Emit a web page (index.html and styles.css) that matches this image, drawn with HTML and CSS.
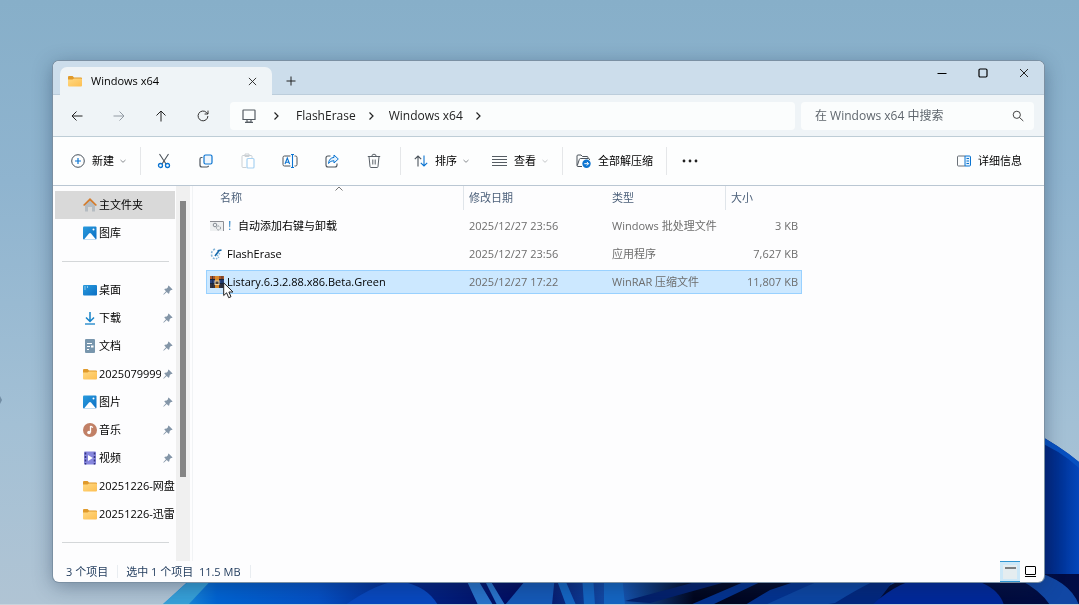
FILE: index.html
```html
<!DOCTYPE html>
<html lang="zh-CN">
<head>
<meta charset="utf-8">
<meta name="viewport" content="width=device-width, initial-scale=1">
<title>Windows x64</title>
<link rel="stylesheet" href="styles.css">
</head>
<body>
<svg class="defs" width="0" height="0" aria-hidden="true">
  <defs>
    <linearGradient id="gFolder" x1="0" y1="0" x2="1" y2="1"><stop offset="0" stop-color="#ffd983"/><stop offset="1" stop-color="#fdbf52"/></linearGradient>
    <linearGradient id="gBlue" x1="0" y1="0" x2="1" y2="1"><stop offset="0" stop-color="#2a9bdd"/><stop offset="1" stop-color="#0b6fc4"/></linearGradient>
    <symbol id="folder" viewBox="0 0 14 12"><path d="M0 2Q0 1 1 1H4.600L6 2.500H13Q14 2.500 14 3.500V5H0Z" fill="#e09a2b"/><path d="M0 5V10.500Q0 11.500 1 11.500H13Q14 11.500 14 10.500V4.200Q14 3.500 13 3.500H6L4.500 4.500H0Z" fill="url(#gFolder)"/></symbol>
    <symbol id="pin" viewBox="0 0 10 10"><path d="M5.600.4 9.600 4.400 8.700 5 7.900 4.900 6.600 6.400 6.300 8.300 5.500 8.800 3.700 7 .7 9.700.3 9.300 3 6.300 1.300 4.600 1.900 3.800 3.800 3.500 5.100 2.100 5 1.200Z" fill="#8496a8"/></symbol>
    <symbol id="chevron-right" viewBox="0 0 8 10"><path d="M2.500 1.500 6 5 2.500 8.500" fill="none" stroke="#222" stroke-width="1.200"/></symbol>
    <symbol id="chevron-down" viewBox="0 0 8 8"><path d="M1.500 3 4 5.300 6.500 3" fill="none" stroke="#8b8f93"/></symbol>
    <symbol id="picture" viewBox="0 0 14 14"><rect y=".5" width="13.500" height="13" rx="1" fill="url(#gBlue)"/><path d="M1 13.500 6 7.500Q7 6.500 8 7.500L13 13.500Z" fill="#fff"/><circle cx="10.500" cy="3.500" r="1" fill="#fff"/></symbol>
    <symbol id="close" viewBox="0 0 10 10"><path d="M1 1 9 9M9 1 1 9" stroke="#222" fill="none"/></symbol>
  </defs>
</svg>

<svg class="wallpaper" viewBox="0 0 1079 605" preserveAspectRatio="none" aria-hidden="true">
  <defs>
    <linearGradient id="sky" x1="0" y1="0" x2="0" y2="1"><stop offset="0" stop-color="#87afc9"/><stop offset=".3" stop-color="#8fb4cf"/><stop offset=".7" stop-color="#a3c0d5"/><stop offset="1" stop-color="#b0c4d4"/></linearGradient>
    <linearGradient id="petalRight" x1="0" y1="0" x2="1" y2="0"><stop offset="0" stop-color="#011667"/><stop offset=".6" stop-color="#003295"/><stop offset="1" stop-color="#0346bb"/></linearGradient>
    <linearGradient id="floor" x1="0" y1="0" x2="1" y2="0"><stop offset="0" stop-color="#2ba0dc"/><stop offset=".06" stop-color="#0063d2"/><stop offset=".17" stop-color="#0550c4"/><stop offset=".26" stop-color="#02268a"/><stop offset=".4" stop-color="#020a5c"/><stop offset=".5" stop-color="#1556b4"/><stop offset=".58" stop-color="#01051d"/><stop offset="1" stop-color="#010c45"/></linearGradient>
  </defs>
  <rect width="1079" height="605" fill="url(#sky)"/>
  <path d="M1030 430Q1060 446 1079 462V605H1030Z" fill="url(#petalRight)"/>
  <path d="M1030 430Q1060 446 1079 462V468Q1060 450 1030 438Z" fill="#0750c0"/>
  <path d="M162 605 196 574H1079V605Z" fill="url(#floor)"/>
  <path d="M162 605 196 575H216L188 605Z" fill="#36a0d8"/>
  <path d="M345 605Q380 581 400 581Q427 586 438 605Z" fill="#0848bf"/>
  <path d="M464 575 478 605H493L475 575ZM482 575 497 605H505L487 575Z" fill="#2873ca"/>
  <path d="M505 605 530 575H555L552 605Z" fill="#1559b7"/>
  <path d="M555 575 566 605H576L563 575ZM582 575H593L595 605H584ZM604 575H622L625 605H604Z" fill="#1465c2"/>
  <path d="M625 601 710 578H740L650 603Z" fill="#03206c"/>
  <path d="M690 605 760 575H775L712 605ZM745 605 770 590 815 575H830L772 605Z" fill="#03328f"/>
  <path d="M765 605 825 578H905L850 605Z" fill="#0c45a2"/>
  <path d="M822 605 835 603Q880 575 900 572L875 605Z" fill="#02277e"/>
  <path d="M872 605Q900 579 935 575Q995 576 1004 605Z" fill="#002899"/>
  <path d="M1030 570Q1070 580 1079 605H1050Q1040 590 1020 580Z" fill="#1147a4"/>
  <rect y="604" width="1079" height="1" fill="#c9d3dc"/>
  <path d="M0 396 2 400 0 404Z" fill="#728da4"/>
</svg>

<main class="desktop">
<section class="window" aria-label="Windows x64">
  <header class="titlebar">
    <div class="tab">
      <svg width="14" height="12"><use href="#folder"/></svg>
      <span class="tab-name">Windows x64</span>
      <button class="tab-close" aria-label="关闭标签页"><svg width="9" height="9"><use href="#close"/></svg></button>
    </div>
    <button class="tab-add" aria-label="新建标签页"><svg width="10" height="10" viewBox="0 0 10 10"><path d="M5 .5V9.500M.5 5H9.500" stroke="#222"/></svg></button>
    <div class="controls">
      <button aria-label="最小化"><svg width="10" height="10" viewBox="0 0 10 10"><path d="M.5 5.500H9.500" stroke="#000"/></svg></button>
      <button aria-label="最大化"><svg width="10" height="10" viewBox="0 0 10 10"><rect x="1" y="1" width="8" height="8" rx="1.200" fill="none" stroke="#000" stroke-width="1.200"/></svg></button>
      <button aria-label="关闭"><svg width="10" height="10"><use href="#close"/></svg></button>
    </div>
  </header>

  <div class="navbar">
    <div class="nav-buttons">
      <button aria-label="后退"><svg width="12" height="12" viewBox="0 0 12 12"><path d="M11.500 6H1M5.500 1.500 1 6 5.500 10.500" fill="none" stroke="#222"/></svg></button>
      <button aria-label="前进" disabled><svg width="12" height="12" viewBox="0 0 12 12"><path d="M.5 6H11M6.500 1.500 11 6 6.500 10.500" fill="none" stroke="#929aa3"/></svg></button>
      <button aria-label="向上"><svg width="12" height="12" viewBox="0 0 12 12"><path d="M6 11.500V1M1.500 5.500 6 1 10.500 5.500" fill="none" stroke="#222"/></svg></button>
      <button aria-label="刷新"><svg width="12" height="12" viewBox="0 0 12 12"><path d="M10.900 6A4.900 4.900 0 1 1 9.600 2.600L11 4M11 .6V4H7.600" fill="none" stroke="#333"/></svg></button>
    </div>
    <nav class="address" aria-label="地址">
      <svg width="14" height="14" viewBox="0 0 14 14"><path d="M1.500 1H12.500Q13 1 13 1.500V10.500H1V1.500Q1 1 1.500 1Z" fill="none" stroke="#555c63" stroke-width="1.200"/><path d="M5 11V13H9V11M3 13.300H11" fill="none" stroke="#555c63" stroke-width="1.200"/></svg>
      <svg class="crumb-sep" width="8" height="10"><use href="#chevron-right"/></svg>
      <a href="#flasherase">FlashErase</a>
      <svg class="crumb-sep" width="8" height="10"><use href="#chevron-right"/></svg>
      <a href="#windows">Windows x64</a>
      <svg class="crumb-sep" width="8" height="10"><use href="#chevron-right"/></svg>
    </nav>
    <label class="search">
      <input type="text" placeholder="在 Windows x64 中搜索" aria-label="搜索">
      <svg width="12" height="12" viewBox="0 0 12 12"><circle cx="4.800" cy="4.800" r="3.600" fill="none" stroke="#444"/><path d="M7.500 7.500 11.300 11" stroke="#444"/></svg>
    </label>
  </div>

  <div class="toolbar">
    <button class="tool"><svg width="14" height="14" viewBox="0 0 14 14"><circle cx="7" cy="7" r="6.300" fill="none" stroke="#46505a"/><path d="M7 4V10M4 7H10" stroke="#0b74d1" stroke-width="1.200"/></svg><span>新建</span><svg width="8" height="8"><use href="#chevron-down"/></svg></button>
    <span class="divider"></span>
    <div class="tool-icons">
      <button aria-label="剪切"><svg width="14" height="16" viewBox="0 0 14 16"><path d="M2.500 1 9 11M11.500 1 5 11" fill="none" stroke="#4b535b" stroke-width="1.100"/><circle cx="3.500" cy="12.500" r="2" fill="none" stroke="#0b74d1" stroke-width="1.300"/><circle cx="10.500" cy="12.500" r="2" fill="none" stroke="#0b74d1" stroke-width="1.300"/></svg></button>
      <button aria-label="复制"><svg width="14" height="14" viewBox="0 0 14 14"><rect x="5" y="1" width="8" height="9" rx="1.500" fill="#eef6fd" stroke="#0b74d1" stroke-width="1.200"/><path d="M3.500 3.500H2.500Q1 3.500 1 5V11Q1 13 3 13H8Q9.500 13 9.500 11.800" fill="none" stroke="#4b535b" stroke-width="1.200"/></svg></button>
      <button aria-label="粘贴" disabled><svg width="14" height="16" viewBox="0 0 14 16"><path d="M5.500 14.500H2Q1 14.500 1 13.500V3.500Q1 2.500 2 2.500H10Q11 2.500 11 3.500V5M4 3.500V1H8V3.500Z" fill="none" stroke="#cbd0d4"/><rect x="6" y="5.500" width="7" height="9.500" rx="1" fill="#fff" stroke="#a8d2f2" stroke-width="1.200"/></svg></button>
      <button aria-label="重命名"><svg width="16" height="16" viewBox="0 0 16 16"><path d="M8.500 3H2.500Q1 3 1 4.500V11.500Q1 13 2.500 13H8.500M12.500 3H13.500Q15 3 15 4.500V11.500Q15 13 13.500 13H12.500" fill="none" stroke="#4b535b"/><path d="M10.500 1.500V14.500M9 1.500H12M9 14.500H12M3 11 5.300 5 7.600 11M3.800 9.200H6.800" fill="none" stroke="#0b74d1" stroke-width="1.100"/></svg></button>
      <button aria-label="共享"><svg width="14" height="14" viewBox="0 0 14 14"><path d="M5.500 2H3Q1 2 1 4V11Q1 13 3 13H10Q12 13 12 11V9.500" fill="none" stroke="#4b535b" stroke-width="1.100"/><path d="M9 1 13.300 5 9 9V6.700Q5.500 6.500 3.500 9.500Q4 3.800 9 3.400Z" fill="#e6f3fd" stroke="#0b74d1" stroke-linejoin="round"/></svg></button>
      <button aria-label="删除"><svg width="14" height="16" viewBox="0 0 14 16"><path d="M.8 3.500H13.200M4.800 3.500Q4.800 1.200 7 1.200T9.200 3.500M2 3.500 3 13.500Q3.100 14.500 4 14.500H10Q10.900 14.500 11 13.500L12 3.500M5.800 6.500V11.500M8.200 6.500V11.500" fill="none" stroke="#5b6269"/></svg></button>
    </div>
    <span class="divider"></span>
    <button class="tool sort"><svg width="14" height="12" viewBox="0 0 14 12"><path d="M4 11.500V1M.8 4.200 4 1 7.200 4.200" fill="none" stroke="#4b535b" stroke-width="1.100"/><path d="M10 .5V11M6.800 7.800 10 11 13.200 7.800" fill="none" stroke="#0b74d1" stroke-width="1.100"/></svg><span>排序</span><svg width="8" height="8"><use href="#chevron-down"/></svg></button>
    <button class="tool"><svg width="15" height="12" viewBox="0 0 15 12"><path d="M0 1.500H15M0 4.500H15M0 7.500H15M0 10.500H15" stroke="#555c63"/></svg><span>查看</span><svg class="faint" width="8" height="8"><use href="#chevron-down"/></svg></button>
    <span class="divider"></span>
    <button class="tool"><svg width="15" height="14" viewBox="0 0 15 14"><path d="M6 12.500H2Q1 12.500 1 11.500V2Q1 1 2 1H5L6.500 2.500H11Q12 2.500 12 3.500V4.500M1.300 11.500 3.300 5.500Q3.600 4.500 4.500 4.500H12.500Q13.800 4.500 13.500 6" fill="none" stroke="#4b535b"/><circle cx="10.500" cy="9.700" r="4.200" fill="#0b74d1"/><path d="M8.300 9.700H12.500M10.800 7.900 12.600 9.700 10.800 11.500" fill="none" stroke="#fff"/></svg><span>全部解压缩</span></button>
    <span class="divider"></span>
    <button class="more" aria-label="更多"><svg width="16" height="4" viewBox="0 0 16 4"><g fill="#222"><circle cx="2" cy="2" r="1.400"/><circle cx="8" cy="2" r="1.400"/><circle cx="14" cy="2" r="1.400"/></g></svg></button>
    <button class="tool details"><svg width="14" height="12" viewBox="0 0 14 12"><path d="M8 1H1.500Q.5 1 .5 2V10Q.5 11 1.500 11H8" fill="none" stroke="#6a7178"/><path d="M8 1H12.500Q13.500 1 13.500 2V10Q13.500 11 12.500 11H8Z" fill="#e4f2fd" stroke="#0b74d1"/><path d="M9.500 3.500H12M9.500 6H12M9.500 8.500H12" stroke="#0b74d1"/></svg><span>详细信息</span></button>
  </div>

  <div class="body">
    <nav class="sidebar" aria-label="导航窗格">
      <a class="place current" href="#home"><svg width="14" height="14" viewBox="0 0 14 14"><path d="M2 6 7 1.500 12 6V13Q12 13.500 11.500 13.500H9V9H5V13.500H2.500Q2 13.500 2 13Z" fill="#b5bcc2"/><path d="M.6 7.500 7 1.300 13.400 7.500" fill="none" stroke="#d57b2a" stroke-width="1.700"/></svg><span>主文件夹</span></a>
      <a class="place" href="#gallery"><svg width="14" height="14"><use href="#picture"/></svg><span>图库</span></a>
      <hr>
      <a class="place" href="#desktop"><svg width="14" height="14" viewBox="0 0 14 14"><rect y="2" width="14" height="10.500" rx="1" fill="url(#gBlue)"/><path d="M1.500 4H2.500M1.500 6H2.500M4 4H5" stroke="#fff"/></svg><span>桌面</span><svg width="10" height="10"><use href="#pin"/></svg></a>
      <a class="place" href="#downloads"><svg width="14" height="14" viewBox="0 0 14 14"><path d="M7 1V10M3 6.500 7 10.500 11 6.500" fill="none" stroke="#1683c8" stroke-width="1.500"/><path d="M2 13H12" stroke="#1683c8" stroke-width="1.300"/></svg><span>下载</span><svg width="10" height="10"><use href="#pin"/></svg></a>
      <a class="place" href="#documents"><svg width="14" height="14" viewBox="0 0 14 14"><rect x="2" width="10" height="14" rx="1" fill="#7896ad"/><path d="M4 4.500H9M4 7.500H7M4 10.500H6" stroke="#fff"/><path d="M8 7.500H10.500" stroke="#fff" stroke-width="2"/></svg><span>文档</span><svg width="10" height="10"><use href="#pin"/></svg></a>
      <a class="place" href="#f2025"><svg width="14" height="12"><use href="#folder"/></svg><span>2025079999</span><svg width="10" height="10"><use href="#pin"/></svg></a>
      <a class="place" href="#pictures"><svg width="14" height="14"><use href="#picture"/></svg><span>图片</span><svg width="10" height="10"><use href="#pin"/></svg></a>
      <a class="place" href="#music"><svg width="14" height="14" viewBox="0 0 14 14"><circle cx="7" cy="7" r="7" fill="#c18066"/><path d="M7.500 3V9.300M7.500 3.200 10 4.500" fill="none" stroke="#fff" stroke-width="1.300"/><circle cx="6" cy="9.500" r="1.800" fill="#fff"/></svg><span>音乐</span><svg width="10" height="10"><use href="#pin"/></svg></a>
      <a class="place" href="#videos"><svg width="14" height="14" viewBox="0 0 14 14"><rect x="1" y=".5" width="12" height="13" rx="1" fill="#8686dd"/><path d="M2.500 1.500V13.500M11.500 1.500V13.500" stroke="#34357d" stroke-width="1.500" stroke-dasharray="2 1.500"/><path d="M5 4 9.800 7 5 10Z" fill="#fff"/></svg><span>视频</span><svg width="10" height="10"><use href="#pin"/></svg></a>
      <a class="place" href="#f1226a"><svg width="14" height="12"><use href="#folder"/></svg><span>20251226-网盘</span></a>
      <a class="place" href="#f1226b"><svg width="14" height="12"><use href="#folder"/></svg><span>20251226-迅雷</span></a>
      <hr>
    </nav>
    <div class="scrollbar"><span class="thumb"></span></div>
    <div class="files">
      <table>
        <colgroup><col class="c-name"><col class="c-date"><col class="c-type"><col class="c-size"></colgroup>
        <thead>
          <tr><th class="sorted">名称<svg class="sort-mark" width="8" height="5" viewBox="0 0 8 5"><path d="M.5 4.500 4 1 7.500 4.500" fill="none" stroke="#777"/></svg></th><th>修改日期</th><th>类型</th><th>大小</th></tr>
        </thead>
        <tbody>
          <tr><td><div class="file"><svg width="14" height="14" viewBox="0 0 14 14"><path d="M0 2.500H13.500V12" fill="none" stroke="#8d8f95"/><rect y="3" width="13" height="9" fill="#eef0f1"/><circle cx="5" cy="6" r="1.800" fill="none" stroke="#858c94"/><circle cx="8.500" cy="9" r="2" fill="none" stroke="#858c94" stroke-dasharray="1.500 1"/></svg><span><span class="bang">！</span>自动添加右键与卸载</span></div></td><td>2025/12/27 23:56</td><td>Windows 批处理文件</td><td>3 KB</td></tr>
          <tr><td><div class="file"><svg width="14" height="14" viewBox="0 0 14 14"><path d="M5 2Q1 4 1.500 8Q2.500 12 6.500 12" fill="none" stroke="#83b4d8" stroke-width="1.500" stroke-dasharray="2 1.500"/><path d="M5 9 9.500 3M7.500 4 11.500 3" stroke="#1769aa" stroke-width="1.600"/><path d="M7 9 10 6M6 12 9 10" stroke="#86badd" stroke-width="1.500" stroke-dasharray="1.500 1"/></svg><span>FlashErase</span></div></td><td>2025/12/27 23:56</td><td>应用程序</td><td>7,627 KB</td></tr>
          <tr class="selected"><td><div class="file"><svg width="14" height="14" viewBox="0 0 14 14"><rect y="1" width="14" height="4" fill="#a8562a"/><rect y="5" width="14" height="4" fill="#29437f"/><rect y="9" width="14" height="4" fill="#35333e"/><path d="M0 4.500H14M0 8.500H14" stroke="#16243c"/><path d="M2.500 1V13M12 1V13" stroke="#16243c" stroke-opacity=".6"/><rect x="5" y="1" width="4" height="12" fill="#d98a2b"/><rect x="5" y="6" width="4" height="3.500" fill="#4a4038" stroke="#f1d5a3"/></svg><span>Listary.6.3.2.88.x86.Beta.Green</span><svg class="cursor" width="12" height="18" viewBox="0 0 12 18"><path d="M.7.8V13.500L3.600 10.800 5.700 15.700 8 14.700 5.900 10H10Z" fill="#fff" stroke="#222" stroke-linejoin="round"/></svg></div></td><td>2025/12/27 17:22</td><td>WinRAR 压缩文件</td><td>11,807 KB</td></tr>
        </tbody>
      </table>
    </div>
  </div>

  <footer class="status">
    <span class="status-part">3 个项目</span>
    <span class="status-part">选中 1 个项目&nbsp; 11.5 MB</span>
    <div class="views">
      <button class="on" aria-label="详细信息视图"><svg width="14" height="14" viewBox="0 0 14 14"><rect width="14" height="14" fill="#e5edf0"/><path d="M2 3H13" stroke="#111"/></svg></button>
      <button aria-label="大图标视图"><svg width="13" height="13" viewBox="0 0 13 13"><rect x="1.500" y="1.500" width="10" height="8" rx=".5" fill="none" stroke="#000"/><path d="M1 11.500H12" stroke="#000"/></svg></button>
    </div>
  </footer>
</section>
</main>
</body>
</html>
```
FILE: styles.css
```css
* { box-sizing: border-box; }

body {
  margin: 0;
  background: #8fb4cf;
  color: #000;
  font: 11px/16px "Open Sans", "Noto Sans CJK SC", sans-serif;
}

button, input { font: inherit; color: inherit; }
button { display: flex; align-items: center; justify-content: center; padding: 0; border: 0; background: none; }
a { color: inherit; text-decoration: none; }
svg { display: block; flex: none; }

.defs { position: absolute; }
.wallpaper { position: fixed; inset: 0; z-index: -1; width: 100%; height: 100%; }

.desktop { display: flex; min-height: 100vh; padding: 61px 35px 23px 53px; }

.window {
  display: flex;
  flex: 1;
  flex-direction: column;
  min-width: 0;
  overflow: hidden;
  border-radius: 6px;
  background: #fdfdfe;
  box-shadow: 0 0 0 1px #7b90a3, 0 4px 20px rgba(20, 40, 70, .4);
}

.titlebar { display: flex; height: 34px; padding-left: 7px; background: #ccddeb; box-shadow: inset 0 -1px #bccddb; }
.tab {
  position: relative;
  display: flex;
  align-items: center;
  width: 212px;
  margin-top: 6px;
  padding: 0 15px 0 8px;
  border-radius: 7px 7px 0 0;
  background: #eff4f7;
}
.tab-name { flex: 1; margin-left: 9px; font-weight: 500; }
.tab-close { width: 10px; height: 20px; }
.tab-add { width: 38px; margin-top: 6px; }
.controls { display: flex; height: 24px; margin-left: auto; }
.controls button { width: 41px; }

.navbar { display: flex; align-items: center; height: 42px; padding-right: 10px; border-bottom: 1px solid #becdd6; background: #eff4f7; font-size: 12px; }
.nav-buttons { display: flex; padding: 0 6px 0 3px; }
.nav-buttons button { width: 42px; height: 28px; }
.address { display: flex; flex: 1; align-items: center; height: 28px; padding-left: 12px; border-radius: 4px; background: #fbfdfd; color: #222; }
.crumb-sep { margin: 0 16px; }
.address a + .crumb-sep { margin: 0 14px 0 11px; }
.search { display: flex; align-items: center; width: 233px; height: 28px; margin-left: 6px; padding: 0 10px 0 14px; border-radius: 4px; background: #fbfdfd; }
.search input { flex: 1; min-width: 0; padding: 0; border: 0; outline: 0; background: none; }
.search input::placeholder { color: #5f666d; opacity: 1; }

.toolbar { display: flex; align-items: center; height: 49px; padding: 0 14px 0 10px; border-bottom: 1px solid #bac7d3; background: #fdfefe; }
.tool { height: 32px; padding: 0 8px; }
.tool span { margin: 0 5px 0 7px; }
.tool span:last-child { margin-right: 0; }
.sort { margin-right: 6px; }
.faint { opacity: .5; }
.divider { width: 1px; height: 28px; margin: 0 5px; background: #e5e7e9; }
.tool-icons { display: flex; margin-left: -3px; }
.tool-icons button { width: 42px; height: 32px; }
.more { width: 36px; height: 32px; }
.details { margin-left: auto; }

.body { display: flex; flex: 1; min-height: 0; }
.sidebar { width: 123px; padding: 5px 1px 0 2px; overflow: hidden; }
.place { display: flex; align-items: center; gap: 2px; height: 28px; padding: 0 2px 0 28px; }
.place.current { background: #d9d9d9; }
.place span { flex: 1; min-width: 0; overflow: hidden; white-space: nowrap; }
.place span:last-child { margin-right: -2px; }
.sidebar hr { height: 1px; margin: 14px 6px 14px 7px; border: 0; background: #d4d7d9; }
.scrollbar { width: 14px; padding: 15px 4px 0; background: #f0f0f0; }
.thumb { display: block; height: 276px; background: #858585; }

.files { flex: 1; min-width: 0; margin-left: 2px; padding-left: 13px; border-left: 1px solid #f1f3f5; overflow: hidden; }
table { width: 596px; margin-top: -4px; table-layout: fixed; border-spacing: 0 4px; }
.c-name { width: 258px; }
.c-date { width: 143px; }
.c-type { width: 119px; }
th, td { height: 24px; padding: 0 5px; font-weight: 400; text-align: left; white-space: nowrap; }
th { position: relative; color: #4c607a; }
th:first-child { padding-left: 14px; }
th:nth-child(odd) { border-right: 1px solid #e0e5ea; }
.sort-mark { position: absolute; top: 0; left: 129px; }
td { color: #6d6d6d; }
td:first-child { padding-left: 4px; color: #000; }
td:last-child { padding-right: 4px; text-align: right; }
.file { position: relative; display: flex; align-items: center; gap: 3px; }
.bang { color: #2b83c5; }
.selected td { border: solid #99d1ff; border-width: 1px 0; background: #cce8ff; }
.selected td:first-child { padding-left: 3px; border-left-width: 1px; }
.selected td:last-child { padding-right: 3px; border-right-width: 1px; }
.cursor { position: absolute; top: 8px; left: 13px; }

.status { display: flex; align-items: stretch; height: 21px; padding: 0 4px 0 13px; color: #1e395b; }
.status-part { display: flex; align-items: center; margin: 4px 0; padding-right: 9px; border-right: 1px solid #e9edf1; }
.status-part + .status-part { padding-left: 8px; }
.views { display: flex; margin-left: auto; }
.views button { width: 20px; }
.views .on { border: solid #2f96d2; border-width: 1px 0; background: #cce8f8; }
```
